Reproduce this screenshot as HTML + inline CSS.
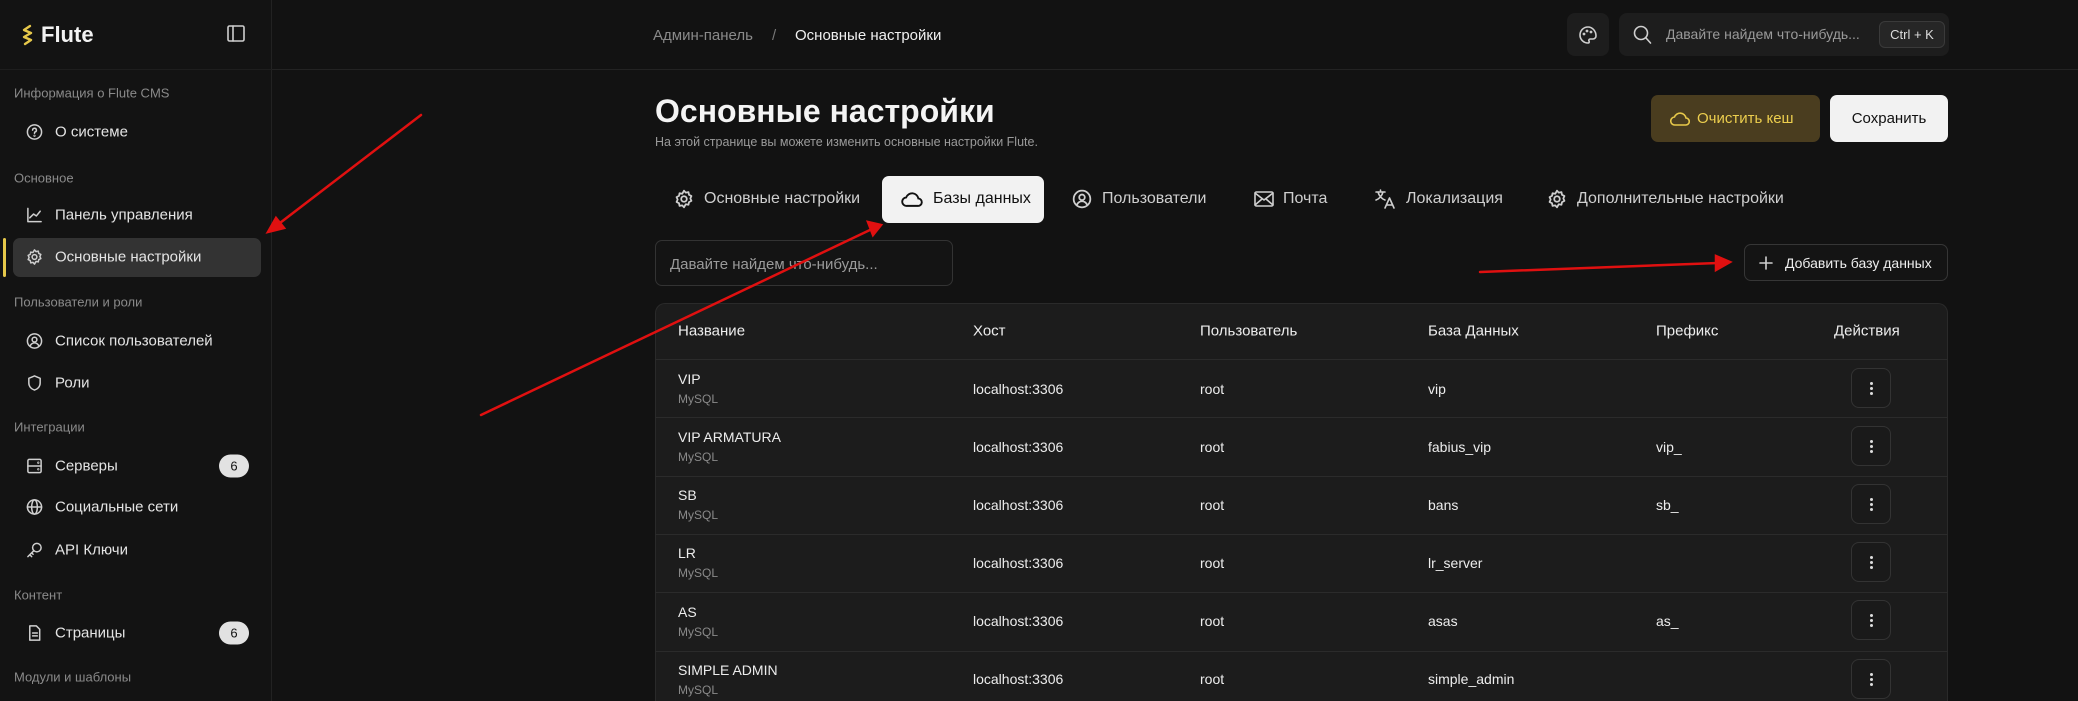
<!DOCTYPE html>
<html><head><meta charset="utf-8"><style>
*{box-sizing:border-box;margin:0;padding:0}
html{width:2078px;height:701px;overflow:hidden}
body{width:2078px;height:701px;overflow:hidden;background:#121212;font-family:"Liberation Sans",sans-serif;color:#e8e8e8;position:relative}
.abs{position:absolute}
.sb{left:0;top:0;width:272px;height:701px;background:#131313;border-right:1px solid #222}
.sec{position:absolute;left:14px;font-size:13px;color:#8a8a8a;transform:translateY(-50%)}
.it{position:absolute;left:55px;font-size:15px;color:#e4e4e4;transform:translateY(-50%)}
.ic{position:absolute;left:26px;width:17px;height:17px;transform:translateY(-50%)}
.badge{position:absolute;left:219px;width:30px;height:23px;border-radius:12px;background:#e2e2e2;color:#111;font-size:13px;text-align:center;line-height:23px;transform:translateY(-50%)}
.hl{left:272px;top:69px;width:1806px;height:1px;background:#232323}
.tab{position:absolute;top:199px;font-size:16px;color:#cfcfcf;transform:translateY(-50%)}
.th{position:absolute;top:331px;font-size:15px;color:#ededed;transform:translateY(-50%)}
.td{position:absolute;font-size:14px;color:#ededed;transform:translateY(-50%)}
.sub{position:absolute;font-size:12px;color:#8a8a8a;transform:translateY(-50%)}
.act{position:absolute;left:1851px;width:40px;height:40px;border:1px solid #333;border-radius:8px;background:#1a1a1a}
.act:after{content:"";position:absolute;left:18px;top:13px;width:3px;height:3px;background:#ddd;border-radius:50%;box-shadow:0 5px 0 #ddd,0 10px 0 #ddd}
.sep{position:absolute;left:655px;width:1293px;height:1px;background:#2b2b2b}
svg.i{fill:none;stroke:#cfcfcf;stroke-width:1.6;stroke-linecap:round;stroke-linejoin:round}
</style></head><body>
<div class="abs sb"></div>
<div class="abs hl"></div>
<div class="abs" style="left:0;top:69px;width:272px;height:1px;background:#1e1e1e"></div>
<svg class="abs" style="left:20px;top:24px" width="16" height="22" viewBox="0 0 16 22"><path d="M10 2 L4 6 L11 9 L4 13 L11 16 L5 20" fill="none" stroke="#e6c84a" stroke-width="2.4" stroke-linecap="round" stroke-linejoin="round"/></svg>
<div class="abs" style="left:41px;top:22px;font-size:22px;font-weight:bold;color:#f2f2f2">Flute</div>
<svg class="abs i" style="left:227px;top:25px" width="18" height="17" viewBox="0 0 18 17"><rect x="1" y="1" width="16" height="15" rx="1.5"/><line x1="6" y1="1" x2="6" y2="16"/></svg>

<div class="sec" style="top:93px">Информация о Flute CMS</div>
<svg class="ic i" style="top:132px" viewBox="0 0 18 18"><circle cx="9" cy="9" r="7.5"/><path d="M7 7a2 2 0 1 1 2.5 2c-.5.2-.5.6-.5 1.3"/><circle cx="9" cy="13" r=".4"/></svg>
<div class="it" style="top:132px">О системе</div>
<div class="sec" style="top:178px">Основное</div>
<svg class="ic i" style="top:215px" viewBox="0 0 18 18"><path d="M2 2v14h14M4 12l4-4 3 2 4-5"/></svg>
<div class="it" style="top:215px">Панель управления</div>
<div class="abs" style="left:13px;top:238px;width:248px;height:39px;background:#333;border-radius:7px"></div>
<div class="abs" style="left:3px;top:238px;width:3px;height:39px;background:#e6c84a;border-radius:2px"></div>
<svg class="ic i" style="top:257px" viewBox="0 0 18 18"><circle cx="9" cy="9" r="2.5"/><path d="M9 1.5l1.6 1.8 2.4-.5.5 2.4 2.2 1.1-1 2.2 1 2.2-2.2 1.1-.5 2.4-2.4-.5L9 16.5l-1.6-1.8-2.4.5-.5-2.4-2.2-1.1 1-2.2-1-2.2 2.2-1.1.5-2.4 2.4.5z"/></svg>
<div class="it" style="top:257px">Основные настройки</div>
<div class="sec" style="top:302px">Пользователи и роли</div>
<svg class="ic i" style="top:341px" viewBox="0 0 18 18"><circle cx="9" cy="9" r="7.5"/><circle cx="9" cy="7.5" r="2.5"/><path d="M4.5 14c1-2 2.5-3 4.5-3s3.5 1 4.5 3"/></svg>
<div class="it" style="top:341px">Список пользователей</div>
<svg class="ic i" style="top:383px" viewBox="0 0 18 18"><path d="M9 1.5l6 2.5v5c0 4-3 6.5-6 7.5-3-1-6-3.5-6-7.5V4z"/></svg>
<div class="it" style="top:383px">Роли</div>
<div class="sec" style="top:427px">Интеграции</div>
<svg class="ic i" style="top:466px" viewBox="0 0 18 18"><rect x="2" y="2" width="14" height="14" rx="1.5"/><line x1="2" y1="9" x2="16" y2="9"/><circle cx="13" cy="5.5" r=".4"/><circle cx="13" cy="12.5" r=".4"/></svg>
<div class="it" style="top:466px">Серверы</div>
<div class="badge" style="top:466px">6</div>
<svg class="ic i" style="top:507px" viewBox="0 0 18 18"><circle cx="9" cy="9" r="7.5"/><ellipse cx="9" cy="9" rx="3" ry="7.5"/><line x1="1.5" y1="9" x2="16.5" y2="9"/></svg>
<div class="it" style="top:507px">Социальные сети</div>
<svg class="ic i" style="top:550px" viewBox="0 0 18 18"><circle cx="11.5" cy="6.5" r="4.5"/><path d="M8.3 9.7L2 16M4 14l2 2M6 12l1.5 1.5"/></svg>
<div class="it" style="top:550px">API Ключи</div>
<div class="sec" style="top:595px">Контент</div>
<svg class="ic i" style="top:633px" viewBox="0 0 18 18"><path d="M4 1.5h7l3.5 3.5v11.5H4z"/><path d="M7 9h5M7 12h5"/></svg>
<div class="it" style="top:633px">Страницы</div>
<div class="badge" style="top:633px">6</div>
<div class="sec" style="top:677px">Модули и шаблоны</div>

<div class="abs" style="left:653px;top:27px;font-size:15px;color:#8a8a8a">Админ-панель</div>
<div class="abs" style="left:772px;top:27px;font-size:15px;color:#777">/</div>
<div class="abs" style="left:795px;top:27px;font-size:15px;color:#f0f0f0">Основные настройки</div>
<div class="abs" style="left:1567px;top:13px;width:42px;height:43px;background:#1d1d1d;border-radius:8px"></div>
<svg class="abs i" style="left:1578px;top:25px" width="20" height="20" viewBox="0 0 20 20"><path d="M10 2a8 8 0 1 0 0 16c1.2 0 1.5-1 1-2s0-2 1.2-2H15a3 3 0 0 0 3-3c0-5-3.6-9-8-9z"/><circle cx="6" cy="9" r=".6"/><circle cx="9" cy="6" r=".6"/><circle cx="13" cy="7" r=".6"/></svg>
<div class="abs" style="left:1619px;top:13px;width:330px;height:43px;background:#1d1d1d;border-radius:8px"></div>
<svg class="abs i" style="left:1633px;top:25px" width="19" height="20" viewBox="0 0 19 20"><circle cx="8" cy="8" r="6.5"/><line x1="13" y1="13" x2="17.5" y2="18"/></svg>
<div class="abs" style="left:1666px;top:26px;font-size:14px;color:#9a9a9a">Давайте найдем что-нибудь...</div>
<div class="abs" style="left:1879px;top:21px;width:66px;height:27px;border:1px solid #3a3a3a;background:#262626;border-radius:6px;font-size:13px;color:#ddd;text-align:center;line-height:25px">Ctrl + K</div>

<div class="abs" style="left:655px;top:93px;font-size:32px;font-weight:bold;color:#f4f4f4">Основные настройки</div>
<div class="abs" style="left:655px;top:135px;font-size:12.5px;color:#9a9a9a">На этой странице вы можете изменить основные настройки Flute.</div>
<div class="abs" style="left:1651px;top:95px;width:169px;height:47px;background:#4a3d1f;border-radius:7px"></div>
<svg class="abs" style="left:1670px;top:110px" width="20" height="17" viewBox="0 0 20 17"><path d="M5 15a4 4 0 0 1-.5-8A6 6 0 0 1 16 8a3.5 3.5 0 0 1-.5 7z" fill="none" stroke="#e8c94a" stroke-width="1.6"/></svg>
<div class="abs" style="left:1697px;top:110px;font-size:15px;color:#ecce4e">Очистить кеш</div>
<div class="abs" style="left:1830px;top:95px;width:118px;height:47px;background:#f2f2f2;border-radius:7px;font-size:15px;color:#111;text-align:center;line-height:47px">Сохранить</div>

<div class="abs" style="left:882px;top:176px;width:162px;height:47px;background:#f2f2f2;border-radius:7px"></div>
<svg class="abs i" style="left:674px;top:189px" width="20" height="20" viewBox="0 0 18 18"><circle cx="9" cy="9" r="2.5"/><path d="M9 1.5l1.6 1.8 2.4-.5.5 2.4 2.2 1.1-1 2.2 1 2.2-2.2 1.1-.5 2.4-2.4-.5L9 16.5l-1.6-1.8-2.4.5-.5-2.4-2.2-1.1 1-2.2-1-2.2 2.2-1.1.5-2.4 2.4.5z"/></svg>
<div class="tab" style="left:704px">Основные настройки</div>
<svg class="abs" style="left:901px;top:190px" width="22" height="18" viewBox="0 0 20 17"><path d="M5 15a4 4 0 0 1-.5-8A6 6 0 0 1 16 8a3.5 3.5 0 0 1-.5 7z" fill="none" stroke="#111" stroke-width="1.8"/></svg>
<div class="tab" style="left:933px;color:#111">Базы данных</div>
<svg class="abs i" style="left:1072px;top:189px" width="20" height="20" viewBox="0 0 18 18"><circle cx="9" cy="9" r="7.5"/><circle cx="9" cy="7.5" r="2.5"/><path d="M4.5 14c1-2 2.5-3 4.5-3s3.5 1 4.5 3"/></svg>
<div class="tab" style="left:1102px">Пользователи</div>
<svg class="abs i" style="left:1254px;top:191px" width="20" height="16" viewBox="0 0 20 16"><rect x="1" y="1" width="18" height="14" rx="1.5"/><path d="M1 2l9 7 9-7M1 14l7-6M19 14l-7-6"/></svg>
<div class="tab" style="left:1283px">Почта</div>
<svg class="abs i" style="left:1374px;top:188px" width="22" height="22" viewBox="0 0 22 22"><path d="M2 4h9M6.5 2v2M4 4c1 4 4 7 7 8M9 4c-1 4-4 7-7 8M11 20l4.5-10L20 20M12.5 17h6"/></svg>
<div class="tab" style="left:1406px">Локализация</div>
<svg class="abs i" style="left:1547px;top:189px" width="20" height="20" viewBox="0 0 18 18"><circle cx="9" cy="9" r="2.5"/><path d="M9 1.5l1.6 1.8 2.4-.5.5 2.4 2.2 1.1-1 2.2 1 2.2-2.2 1.1-.5 2.4-2.4-.5L9 16.5l-1.6-1.8-2.4.5-.5-2.4-2.2-1.1 1-2.2-1-2.2 2.2-1.1.5-2.4 2.4.5z"/></svg>
<div class="tab" style="left:1577px">Дополнительные настройки</div>

<div class="abs" style="left:655px;top:240px;width:298px;height:46px;border:1px solid #333;border-radius:7px;background:#141414"></div>
<div class="abs" style="left:670px;top:256px;font-size:15px;color:#9a9a9a">Давайте найдем что-нибудь...</div>
<div class="abs" style="left:1744px;top:244px;width:204px;height:37px;border:1px solid #363636;border-radius:7px;background:#141414"></div>
<svg class="abs i" style="left:1759px;top:256px" width="14" height="14" viewBox="0 0 14 14"><path d="M7 1v12M1 7h12"/></svg>
<div class="abs" style="left:1785px;top:255px;font-size:14px;color:#eee">Добавить базу данных</div>

<div class="abs" style="left:655px;top:303px;width:1293px;height:398px;background:#1c1c1c;border:1px solid #2a2a2a;border-bottom:none;border-radius:10px 10px 0 0"></div>
<div class="th" style="left:678px">Название</div>
<div class="th" style="left:973px">Хост</div>
<div class="th" style="left:1200px">Пользователь</div>
<div class="th" style="left:1428px">База Данных</div>
<div class="th" style="left:1656px">Префикс</div>
<div class="th" style="left:1834px">Действия</div>

<div class="sep" style="top:359px"></div>
<div class="td" style="left:678px;top:379px">VIP</div><div class="sub" style="left:678px;top:399px">MySQL</div>
<div class="td" style="left:973px;top:389px">localhost:3306</div><div class="td" style="left:1200px;top:389px">root</div><div class="td" style="left:1428px;top:389px">vip</div>
<div class="act" style="top:368px"></div>

<div class="sep" style="top:417px"></div>
<div class="td" style="left:678px;top:437px">VIP ARMATURA</div><div class="sub" style="left:678px;top:457px">MySQL</div>
<div class="td" style="left:973px;top:447px">localhost:3306</div><div class="td" style="left:1200px;top:447px">root</div><div class="td" style="left:1428px;top:447px">fabius_vip</div><div class="td" style="left:1656px;top:447px">vip_</div>
<div class="act" style="top:426px"></div>

<div class="sep" style="top:476px"></div>
<div class="td" style="left:678px;top:495px">SB</div><div class="sub" style="left:678px;top:515px">MySQL</div>
<div class="td" style="left:973px;top:505px">localhost:3306</div><div class="td" style="left:1200px;top:505px">root</div><div class="td" style="left:1428px;top:505px">bans</div><div class="td" style="left:1656px;top:505px">sb_</div>
<div class="act" style="top:484px"></div>

<div class="sep" style="top:534px"></div>
<div class="td" style="left:678px;top:553px">LR</div><div class="sub" style="left:678px;top:573px">MySQL</div>
<div class="td" style="left:973px;top:563px">localhost:3306</div><div class="td" style="left:1200px;top:563px">root</div><div class="td" style="left:1428px;top:563px">lr_server</div>
<div class="act" style="top:542px"></div>

<div class="sep" style="top:592px"></div>
<div class="td" style="left:678px;top:612px">AS</div><div class="sub" style="left:678px;top:632px">MySQL</div>
<div class="td" style="left:973px;top:621px">localhost:3306</div><div class="td" style="left:1200px;top:621px">root</div><div class="td" style="left:1428px;top:621px">asas</div><div class="td" style="left:1656px;top:621px">as_</div>
<div class="act" style="top:600px"></div>

<div class="sep" style="top:651px"></div>
<div class="td" style="left:678px;top:670px">SIMPLE ADMIN</div><div class="sub" style="left:678px;top:690px">MySQL</div>
<div class="td" style="left:973px;top:679px">localhost:3306</div><div class="td" style="left:1200px;top:679px">root</div><div class="td" style="left:1428px;top:679px">simple_admin</div>
<div class="act" style="top:659px"></div>

<svg class="abs" style="left:0;top:0" width="2078" height="701">
<g stroke="#e01010" stroke-width="2.5" fill="#e01010" stroke-linecap="round">
<line x1="421" y1="115" x2="276" y2="226"/><polygon points="268,232 276,218 284,228" />
<line x1="481" y1="415" x2="872" y2="229"/><polygon points="881,225 868,222 873,235"/>
<line x1="1480" y1="272" x2="1718" y2="263"/><polygon points="1730,262 1716,256 1716,270"/>
</g></svg>
</body></html>
